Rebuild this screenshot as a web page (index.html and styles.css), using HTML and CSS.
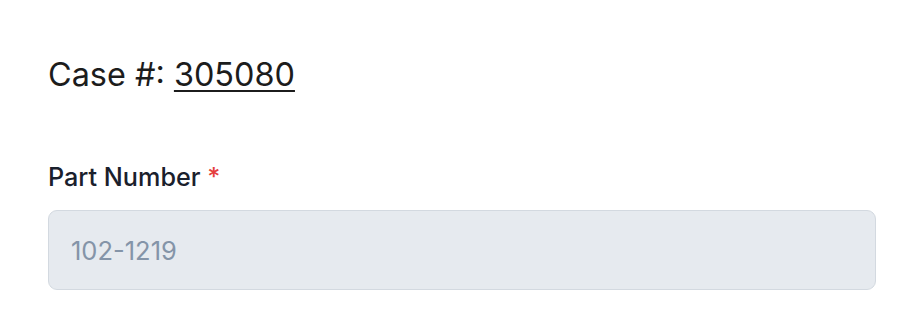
FILE: index.html
```html
<!DOCTYPE html>
<html lang="en">
<head>
<meta charset="utf-8">
<title>Case</title>
<link rel="stylesheet" href="styles.css">
</head>
<body>
<main class="page">
  <h2 class="case-title">Case #: <a class="case-link" href="#">305080</a></h2>
  <div class="field">
    <label class="field-label" for="part">Part Number <span class="required">*</span></label>
    <input class="field-input" id="part" type="text" placeholder="102-1219" disabled>
  </div>
</main>
</body>
</html>
```

FILE: styles.css
```css
html, body {
  margin: 0;
  padding: 0;
  background: #ffffff;
}
body {
  font-family: Inter, "Noto Sans", sans-serif;
}
.page {
  padding: 52px 36px 0 48px;
}
.case-title {
  margin: 0;
  font-size: 32.4px;
  font-weight: 400;
  line-height: 46px;
  color: #1c1c1c;
}
.case-link {
  color: #1c1c1c;
  text-decoration: underline;
  text-underline-offset: 4px;
  text-decoration-thickness: 2px;
}
.field {
  margin-top: 61px;
  display: flex;
  flex-direction: column;
}
.field-label {
  font-size: 25.2px;
  line-height: 36px;
  font-weight: 450;
  color: #1a202c;
  margin-bottom: 15px;
}
.required {
  color: #e53e3e;
}
.field-input {
  box-sizing: border-box;
  height: 80px;
  width: 100%;
  padding: 0 22px;
  border: 1.5px solid #d3d9e0;
  border-radius: 9px;
  background: #e6eaef;
  font-family: Inter, "Noto Sans", sans-serif;
  font-size: 25.5px;
  color: #8494a8;
  outline: none;
}
.field-input::placeholder {
  color: #8494a8;
  opacity: 1;
}
```
